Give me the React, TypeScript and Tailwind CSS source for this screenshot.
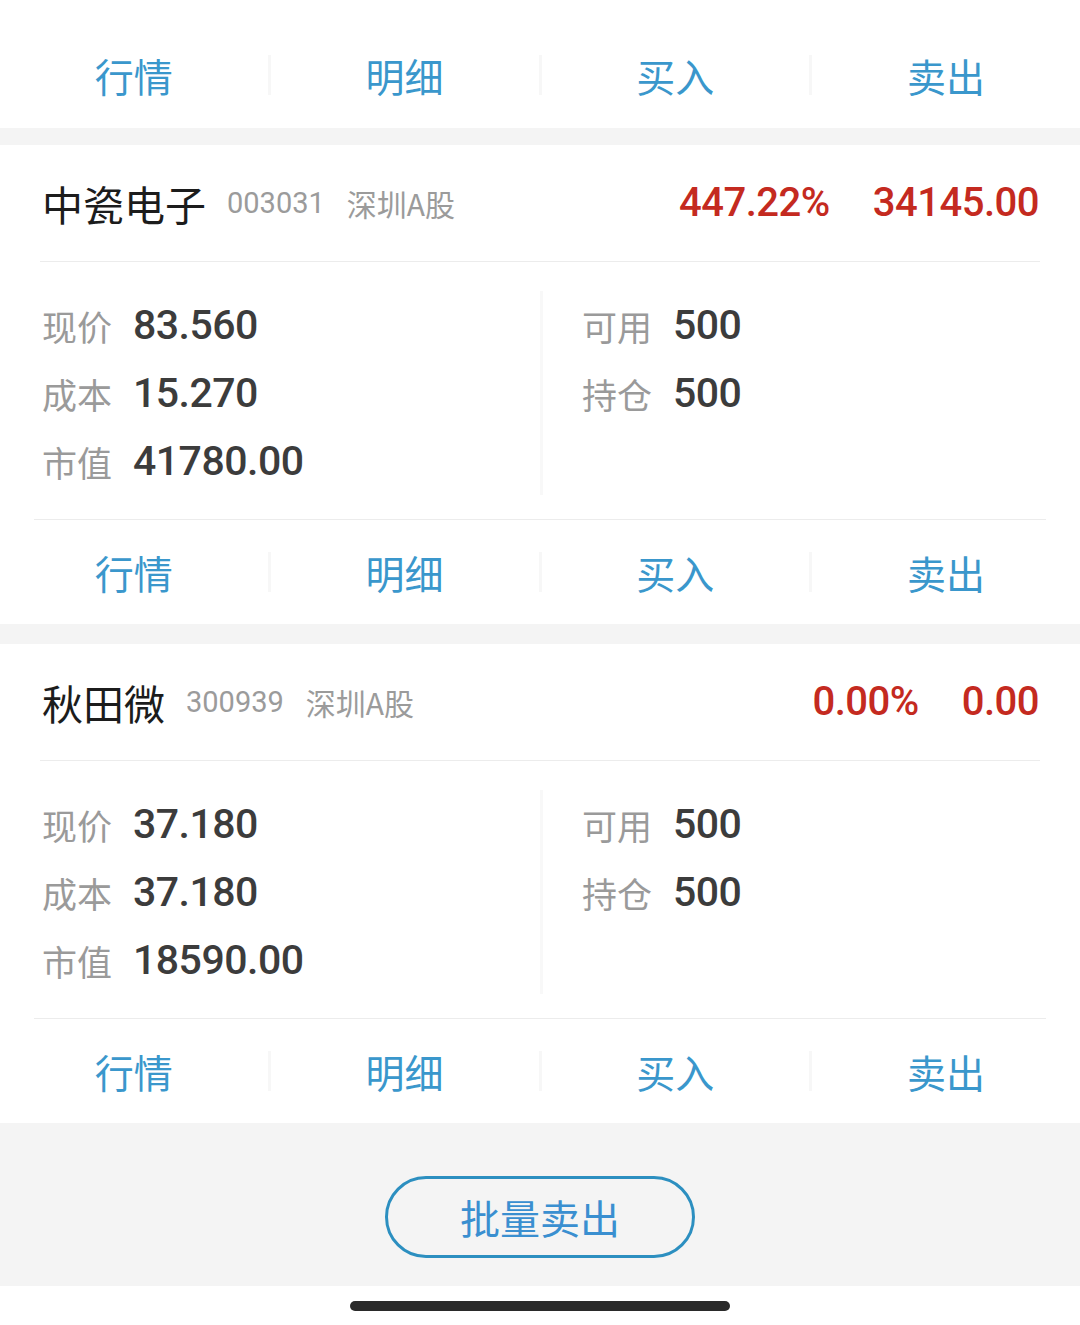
import React from "react";

const CJK = "font-['Noto_Sans_CJK_SC','Noto_Sans',sans-serif]";
const NUM = "font-['Roboto','Noto_Sans_CJK_SC',sans-serif]";

function ActionRow({ top = false }: { top?: boolean }) {
  const items = ["行情", "明细", "买入", "卖出"];
  return (
    <div className={`flex items-center bg-white ${top ? "h-[128px] pt-[22px]" : "h-[104px]"}`}>
      {items.map((t, i) => (
        <React.Fragment key={t}>
          {i > 0 && <div className="w-[3px] h-[40px] bg-[#f7f7f7]" />}
          <div className={`flex-1 text-center text-[39px] leading-none text-[#3a97cc] ${CJK}`}>{t}</div>
        </React.Fragment>
      ))}
    </div>
  );
}

function Field({ label, value }: { label: string; value: string }) {
  return (
    <div className="flex items-center h-[68px]">
      <span className={`text-[35px] leading-none text-[#9a9a9a] ${CJK}`}>{label}</span>
      <span className={`ml-[21px] text-[41px] leading-none font-medium tracking-[-0.5px] text-[#3c3c3c] ${NUM}`}>{value}</span>
    </div>
  );
}

type Stock = {
  name: string;
  code: string;
  market: string;
  pct: string;
  pl: string;
  price: string;
  cost: string;
  mv: string;
  avail: string;
  hold: string;
};

function Card({ s }: { s: Stock }) {
  return (
    <div className="bg-white">
      <div className="flex items-center h-[116px] pl-[42px] pr-[41px]">
        <span className={`text-[41px] leading-none text-[#1c1c1c] ${CJK}`}>{s.name}</span>
        <span className={`ml-[21px] text-[29px] leading-none text-[#9b9b9b] ${NUM}`}>{s.code}</span>
        <span className={`ml-[22px] text-[30px] leading-none text-[#9b9b9b] ${CJK}`}>{s.market}</span>
        <div className="flex-1" />
        <span className={`text-[40px] leading-none font-medium tracking-[-0.5px] text-[#c42a20] ${NUM}`}>{s.pct}</span>
        <span className={`ml-[43px] text-[40px] leading-none font-medium tracking-[-0.5px] text-[#c42a20] ${NUM}`}>{s.pl}</span>
      </div>
      <div className="mx-[40px] h-px bg-[#ececec]" />
      <div className="flex pt-[29px] pb-[24px]">
        <div className="flex-1 pl-[42px]">
          <Field label="现价" value={s.price} />
          <Field label="成本" value={s.cost} />
          <Field label="市值" value={s.mv} />
        </div>
        <div className="w-[3px] bg-[#f8f8f8]" />
        <div className="flex-1 pl-[39px]">
          <Field label="可用" value={s.avail} />
          <Field label="持仓" value={s.hold} />
        </div>
      </div>
      <div className="mx-[34px] h-px bg-[#ececec]" />
      <ActionRow />
    </div>
  );
}

const stocks: Stock[] = [
  {
    name: "中瓷电子",
    code: "003031",
    market: "深圳A股",
    pct: "447.22%",
    pl: "34145.00",
    price: "83.560",
    cost: "15.270",
    mv: "41780.00",
    avail: "500",
    hold: "500",
  },
  {
    name: "秋田微",
    code: "300939",
    market: "深圳A股",
    pct: "0.00%",
    pl: "0.00",
    price: "37.180",
    cost: "37.180",
    mv: "18590.00",
    avail: "500",
    hold: "500",
  },
];

export default function App() {
  return (
    <div className="w-[1080px] h-[1325px] overflow-hidden bg-white flex flex-col">
      <ActionRow top />
      <div className="h-[17px] bg-[#f4f4f4]" />
      <Card s={stocks[0]} />
      <div className="h-[20px] bg-[#f4f4f4]" />
      <Card s={stocks[1]} />
      <div className="h-[163px] bg-[#f4f4f4] flex justify-center pt-[53px]">
        <div className={`w-[310px] h-[82px] rounded-full border-[3px] border-[#2c8fc0] flex items-center justify-center text-[40px] leading-none text-[#3a8fd0] ${CJK}`}>
          批量卖出
        </div>
      </div>
      <div className="flex-1 bg-white flex justify-center pt-[15px]">
        <div className="w-[380px] h-[10px] rounded-full bg-[#2a2a2a]" />
      </div>
    </div>
  );
}
